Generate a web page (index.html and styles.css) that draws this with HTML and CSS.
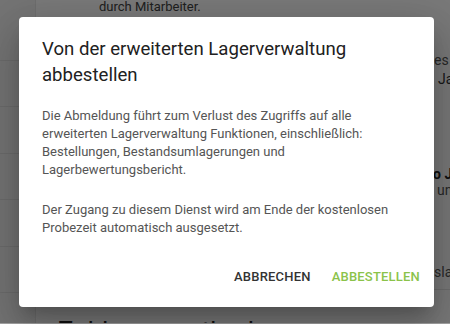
FILE: index.html
```html
<!DOCTYPE html>
<html lang="de">
<head>
<meta charset="utf-8">
<link rel="stylesheet" href="styles.css">
</head>
<body>
<div class="page">
  <aside class="sidebar">
    <div class="side-row"></div>
    <div class="side-row"></div>
    <div class="side-row"></div>
    <div class="side-row"></div>
    <div class="side-row"></div>
    <div class="side-row"></div>
    <div class="side-row"></div>
  </aside>
  <main class="main">
    <p class="bg-text first">durch Mitarbeiter.</p>
    <div class="bg-right r1">es</div>
    <div class="bg-right r2">Ja</div>
    <div class="bg-right r3 bold">o Ja</div>
    <div class="bg-right r4">ung</div>
    <div class="bg-right r5">sla</div>
    <div class="bg-line"></div>
    <h2 class="bg-heading">Zahlungsmethode</h2>
  </main>
  <div class="overlay"></div>
  <div class="footer-strip"></div>
  <div class="dialog">
    <h1 class="dialog-title">Von der erweiterten Lagerverwaltung abbestellen</h1>
    <div class="dialog-body">
      <p>Die Abmeldung führt zum Verlust des Zugriffs auf alle erweiterten Lagerverwaltung Funktionen, einschließlich: Bestellungen, Bestandsumlagerungen und Lagerbewertungsbericht.</p>
      <p>Der Zugang zu diesem Dienst wird am Ende der kostenlosen Probezeit automatisch ausgesetzt.</p>
    </div>
    <div class="dialog-actions">
      <button class="btn btn-cancel">Abbrechen</button>
      <button class="btn btn-confirm">Abbestellen</button>
    </div>
  </div>
</div>
</body>
</html>
```

FILE: styles.css
```css
* { box-sizing: border-box; }
html, body { margin: 0; padding: 0; }
body {
  font-family: Roboto, "Liberation Sans", sans-serif;
  width: 450px;
  height: 324px;
  overflow: hidden;
  background: #ffffff;
}
.page {
  position: relative;
  width: 450px;
  height: 324px;
  overflow: hidden;
  display: flex;
}
.sidebar {
  width: 36px;
  flex: none;
  background: #f2f2f2;
  border-right: 1px solid #e6e6e6;
  padding-top: 14px;
}
.side-row {
  height: 46.5px;
  border-bottom: 1px solid #e2e2e2;
}
.main {
  position: relative;
  flex: 1;
  background: #fdfdfd;
  padding-left: 63px;
}
.bg-text {
  margin: 0;
  font-size: 13px;
  color: #444;
}
.first { margin-top: 0; line-height: 14px; }
.bg-right {
  position: absolute;
  font-size: 14px;
  color: #555;
  white-space: nowrap;
}
.r1 { top: 52px; left: 398px; }
.r2 { top: 71px; left: 402px; color: #333; }
.r3 { top: 166px; left: 397px; font-weight: 700; color: #222; }
.r4 { top: 182px; left: 401px; }
.r5 { top: 264px; left: 398px; }
.bg-line {
  position: absolute;
  left: 390px;
  right: 0;
  top: 289px;
  border-top: 1px solid #e4e4e4;
}
.bg-heading {
  position: absolute;
  left: 22px;
  top: 316px;
  margin: 0;
  font-size: 26px;
  font-weight: 400;
  line-height: normal;
  color: #222;
  white-space: nowrap;
}
.overlay {
  position: absolute;
  inset: 0;
  background: rgba(0, 0, 0, 0.52);
}
.footer-strip {
  position: absolute;
  left: 0;
  right: 0;
  bottom: 0;
  height: 1px;
  background: #a6a6a6;
}
.dialog {
  position: absolute;
  left: 19px;
  top: 17px;
  width: 415px;
  height: 290px;
  background: #fff;
  border-radius: 4px;
  box-shadow: 0 11px 15px -7px rgba(0,0,0,.2), 0 24px 38px 3px rgba(0,0,0,.14), 0 9px 46px 8px rgba(0,0,0,.12);
  padding: 19px 23px 0;
  display: flex;
  flex-direction: column;
}
.dialog-title {
  margin: 0;
  font-size: 18.6px;
  font-weight: 400;
  line-height: 26px;
  color: #212121;
}
.dialog-body {
  margin-top: 19px;
  font-size: 13px;
  line-height: 18px;
  color: #555;
}
.dialog-body p { margin: 0 0 22px; }
.dialog-body p + p { margin-top: 1px; }
.dialog-actions {
  margin-top: auto;
  display: flex;
  justify-content: flex-end;
  gap: 5px;
  margin-right: -17px;
  padding-bottom: 19px;
}
.btn {
  border: 0;
  background: none;
  font-family: Roboto, "Liberation Sans", sans-serif;
  font-size: 13px;
  font-weight: 500;
  text-transform: uppercase;
  letter-spacing: 0.2px;
  padding: 0 8px;
  height: 36px;
  line-height: 36px;
}
.btn-cancel { color: #333; }
.btn-confirm { color: #8bc34a; }
```
